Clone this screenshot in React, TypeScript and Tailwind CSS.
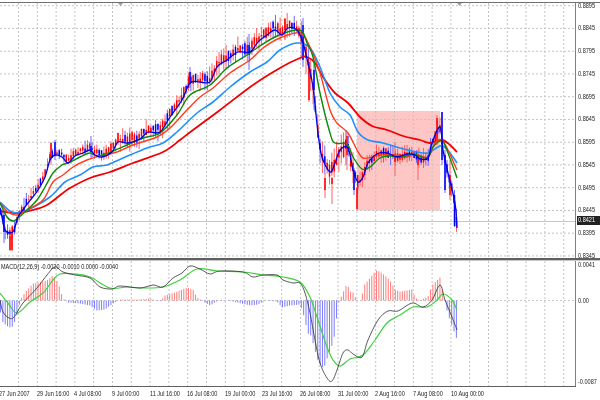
import React from 'react';

type Pt = [number, number];

const fast: Pt[] = [[0,208],[2,217],[5,230],[10,233],[14,230],[18,217],[25,207],[32,198],[38,190],[45,177],[50,160],[55,155],[62,157],[68,163],[75,156],[83,153],[90,150],[95,155],[102,157],[112,152],[118,142],[128,143],[140,139],[148,132],[160,132],[170,117],[182,100],[190,83],[200,82],[210,82],[217,67],[227,60],[238,52],[250,52],[258,42],[267,35],[275,30],[282,35],[288,28],[297,30],[303,43],[308,63],[313,87],[318,133],[322,157],[330,172],[335,163],[340,150],[348,148],[353,170],[358,182],[363,177],[368,163],[377,154],[387,153],[397,157],[407,154],[415,155],[420,159],[428,158],[432,143],[440,127],[443,150],[448,173],[455,203],[457,228]];
const green: Pt[] = [[0,203],[7,217],[13,221],[18,218],[27,210],[37,200],[45,187],[53,173],[62,165],[68,163],[80,157],[90,153],[98,156],[113,151],[127,145],[143,138],[160,133],[177,115],[190,95],[210,85],[227,68],[247,55],[257,48],[277,36],[300,30],[307,43],[313,57],[320,93],[330,133],[335,143],[347,144],[353,157],[362,169],[370,167],[380,158],[390,156],[403,157],[413,154],[427,158],[433,147],[442,141],[448,153],[457,178]];
const orange: Pt[] = [[0,203],[8,212],[17,215],[27,210],[43,200],[53,182],[63,175],[73,167],[87,160],[100,156],[117,152],[133,145],[157,137],[170,128],[187,110],[200,97],[213,88],[230,73],[250,60],[263,48],[280,38],[300,33],[310,47],[320,73],[330,110],[337,123],[348,133],[357,150],[363,158],[372,157],[380,155],[393,155],[407,157],[415,154],[428,157],[435,143],[442,140],[448,150],[457,170]];
const sky: Pt[] = [[0,202],[10,211],[18,213],[28,210],[50,197],[65,182],[80,175],[93,167],[107,165],[123,158],[147,148],[163,143],[177,132],[197,113],[213,102],[230,87],[250,72],[267,62],[280,50],[297,43],[310,48],[320,67],[330,93],[340,107],[350,115],[358,132],[368,140],[383,143],[400,148],[417,152],[428,153],[438,147],[443,146],[450,153],[457,163]];
const red: Pt[] = [[0,211],[17,213],[33,210],[47,205],[63,193],[70,188],[90,178],[110,172],[133,163],[163,152],[180,140],[193,130],[220,110],[253,85],[280,68],[300,58],[307,57],[315,63],[323,77],[335,93],[348,103],[360,117],[372,126],[387,130],[403,136],[420,140],[430,143],[442,140],[450,145],[457,152]];

const macd: Pt[] = [[0,300],[3,312],[9,318],[14,317],[23,303],[37,288],[47,275],[55,267],[63,272],[75,275],[90,278],[100,287],[112,289],[120,286],[140,288],[153,285],[163,287],[173,278],[182,273],[190,266],[200,269],[210,274],[220,271],[243,272],[253,277],[263,275],[277,275],[283,280],[293,283],[300,283],[305,293],[310,313],[315,340],[320,363],[327,378],[332,381],[337,370],[343,353],[348,350],[353,354],[362,357],[368,340],[378,320],[388,311],[398,311],[412,303],[423,307],[432,300],[440,285],[445,300],[452,317],[457,330]];
const signal: Pt[] = [[0,293],[8,303],[17,313],[30,302],[43,293],[53,280],[60,274],[75,274],[90,277],[110,288],[127,287],[143,288],[163,287],[180,280],[197,269],[217,271],[243,272],[263,275],[283,277],[300,282],[310,297],[317,317],[327,347],[333,360],[340,366],[350,359],[363,355],[375,340],[387,323],[400,315],[413,307],[427,307],[437,300],[443,294],[452,300],[457,310]];

const histogram: Pt[] = [[0,-10],[3,-22],[9,-27],[13,-26],[18,-12],[20,0],[25,8],[33,17],[40,18],[47,20],[53,25],[58,18],[63,2],[68,-2],[80,-3],[90,-5],[97,-10],[105,-9],[113,-3],[120,1],[140,1],[150,2],[160,-1],[165,5],[175,8],[187,13],[193,11],[197,3],[205,-2],[210,-5],[220,1],[233,-1],[250,-5],[258,-4],[265,0],[277,-1],[282,-7],[290,-5],[300,-4],[303,-12],[308,-33],[311,-35],[315,-50],[318,-60],[322,-67],[325,-65],[328,-55],[332,-45],[335,-33],[338,-4],[340,1],[344,10],[347,17],[350,9],[353,8],[357,0],[361,0],[364,15],[368,20],[372,25],[376,30],[380,29],[385,25],[390,20],[395,11],[400,9],[407,10],[412,11],[415,3],[420,0],[428,4],[432,15],[437,20],[440,23],[443,7],[447,-10],[450,-20],[453,-28],[457,-39]];

const lerp = (pts: Pt[], x: number) => {
  for (let i = 1; i < pts.length; i++) {
    if (x <= pts[i][0]) {
      const [x0, y0] = pts[i - 1];
      const [x1, y1] = pts[i];
      return y0 + ((y1 - y0) * (x - x0)) / (x1 - x0);
    }
  }
  return pts[pts.length - 1][1];
};

// catmull-rom, keeps the traced points on the curve
const smooth = (p: Pt[]) => {
  let d = `M${p[0][0]} ${p[0][1]}`;
  for (let i = 0; i < p.length - 1; i++) {
    const a = p[Math.max(i - 1, 0)];
    const b = p[i];
    const c = p[i + 1];
    const e = p[Math.min(i + 2, p.length - 1)];
    d += `C${(b[0] + (c[0] - a[0]) / 6).toFixed(1)} ${(b[1] + (c[1] - a[1]) / 6).toFixed(1)} ${(c[0] - (e[0] - b[0]) / 6).toFixed(1)} ${(c[1] - (e[1] - b[1]) / 6).toFixed(1)} ${c[0]} ${c[1]}`;
  }
  return d;
};

const rnd = (n: number) => {
  const v = Math.sin(n * 12.9898) * 43758.5453;
  return v - Math.floor(v);
};

const spread = (x: number) => {
  if (x < 30) return 9;
  if (x < 110) return 7;
  if (x < 300) return 11;
  if (x < 358) return 16;
  if (x < 430) return 9;
  return 10;
};

type Bar = { x: number; hi: number; lo: number; top: number; bot: number; up: boolean };

const bars: Bar[] = [];
for (let i = 0; i * 2.35 <= 457; i++) {
  const x = i * 2.35 + 0.5;
  const mid = lerp(fast, x) - (x > 25 && x < 300 ? 3 : 0);
  const r = spread(x);
  const hi = mid - r * (0.3 + rnd(i) * 0.9);
  const lo = mid + r * (0.3 + rnd(i + 50) * 0.9);
  const top = mid - r * 0.6 * rnd(i + 100);
  const bot = mid + r * 0.5 * rnd(i + 150);
  const slope = lerp(fast, x + 4) - lerp(fast, x - 4);
  bars.push({ x, hi, lo, top, bot, up: rnd(i + 200) + (slope < 0 ? 0.2 : -0.1) > 0.5 });
}

const extraBars: Bar[] = [
  { x: 4, hi: 210, lo: 243, top: 215, bot: 232, up: false },
  { x: 10, hi: 235, lo: 251, top: 236, bot: 250, up: true },
  { x: 12, hi: 232, lo: 251, top: 234, bot: 250, up: true },
  { x: 51, hi: 142, lo: 165, top: 143, bot: 158, up: true },
  { x: 55, hi: 140, lo: 160, top: 142, bot: 156, up: false },
  { x: 91, hi: 136, lo: 158, top: 146, bot: 152, up: false },
  { x: 190, hi: 67, lo: 88, top: 72, bot: 84, up: false },
  { x: 249, hi: 34, lo: 70, top: 45, bot: 55, up: false },
  { x: 285, hi: 18, lo: 40, top: 19, bot: 30, up: true },
  { x: 303, hi: 18, lo: 67, top: 25, bot: 60, up: false },
  { x: 309, hi: 60, lo: 102, top: 62, bot: 100, up: true },
  { x: 314, hi: 60, lo: 110, top: 70, bot: 90, up: false },
  { x: 325, hi: 173, lo: 198, top: 178, bot: 190, up: true },
  { x: 332, hi: 177, lo: 204, top: 178, bot: 184, up: true },
  { x: 347, hi: 133, lo: 170, top: 136, bot: 155, up: true },
  { x: 354, hi: 168, lo: 195, top: 170, bot: 190, up: false },
  { x: 357, hi: 187, lo: 210, top: 188, bot: 209, up: true },
  { x: 395, hi: 142, lo: 176, top: 155, bot: 162, up: true },
  { x: 418, hi: 150, lo: 180, top: 155, bot: 165, up: true },
  { x: 437, hi: 115, lo: 145, top: 118, bot: 140, up: true },
  { x: 442, hi: 112, lo: 165, top: 112, bot: 160, up: false },
  { x: 445, hi: 150, lo: 193, top: 155, bot: 190, up: false },
  { x: 450, hi: 160, lo: 200, top: 175, bot: 195, up: true },
  { x: 454.5, hi: 190, lo: 227, top: 195, bot: 226, up: false },
  { x: 456.5, hi: 212, lo: 232, top: 221, bot: 226, up: true },
];

const gridX = Array.from({ length: 30 }, (_, i) => 18.5 + i * 18.8);
const gridY = Array.from({ length: 12 }, (_, i) => 5.7 + i * 22.75);
const prices = ['0.8895', '0.8845', '0.8795', '0.8745', '0.8695', '0.8645', '0.8595', '0.8545', '0.8495', '0.8445', '0.8395', '0.8345'];
const times = ['27 Jun 2007', '29 Jun 16:00', '4 Jul 08:00', '9 Jul 00:00', '11 Jul 16:00', '16 Jul 08:00', '19 Jul 00:00', '23 Jul 16:00', '26 Jul 08:00', '31 Jul 00:00', '2 Aug 16:00', '7 Aug 08:00', '10 Aug 00:00'];

const App: React.FC = () => {
  return (
    <div className="w-[600px] h-[400px] bg-white overflow-hidden flex flex-col blur-[0.3px] text-[6.8px] text-[#222] font-['Liberation_Sans',Arial,sans-serif]">
      <div className="h-[2px] shrink-0" />
      <div className="h-[1px] shrink-0 bg-[#707070] w-full" />

      <div className="h-[255px] shrink-0 flex">
        <svg width="575" height="255" viewBox="0 3 575 255" className="shrink-0">
          <rect x="357" y="111" width="83" height="99.5" fill="#ffc6c6" />
          {gridX.map((x) => (
            <line key={x} x1={x} x2={x} y1="3" y2="258" stroke="#c4c4c4" strokeDasharray="2 2" />
          ))}
          {gridY.map((y) => (
            <line key={y} x1="0" x2="575" y1={y} y2={y} stroke="#c4c4c4" strokeDasharray="2 2" />
          ))}
          <line x1="0" x2="575" y1="221.5" y2="221.5" stroke="#c8c8c8" />
          <polygon points="118,3 123,3 120.5,6" fill="#a0a0a0" />
          <polygon points="457,3 462,3 459.5,6" fill="#a0a0a0" />

          {[...bars, ...extraBars].map((b, i) => (
            <g key={i}>
              <line x1={b.x} x2={b.x} y1={b.hi} y2={b.lo} stroke={b.up ? '#ff6060' : '#6868ff'} strokeWidth="1" />
              <line x1={b.x} x2={b.x} y1={b.top} y2={b.bot} stroke={b.up ? '#ff0000' : '#0000ff'} strokeWidth="1.5" />
            </g>
          ))}

          <path d={smooth(red)} fill="none" stroke="#f00000" strokeWidth="1.8" />
          <path d={smooth(sky)} fill="none" stroke="#1e90ff" strokeWidth="1.6" />
          <path d={smooth(orange)} fill="none" stroke="#ff3c1e" strokeWidth="1.4" />
          <path d={smooth(green)} fill="none" stroke="#0a8a0a" strokeWidth="1.4" />
          <path d={smooth(fast)} fill="none" stroke="#0000e0" strokeWidth="1.3" />
        </svg>
        <div className="relative w-[25px] border-l border-[#808080] pl-[2px] flex flex-col">
          {prices.map((p) => (
            <div key={p} className="h-[22.75px] shrink-0 flex items-center first:-mt-[8.7px]">
              <span className="scale-x-[0.82] origin-left">{p}</span>
            </div>
          ))}
          <div className="absolute left-[1px] top-[213px] h-[9px] w-[24px] bg-[#222] text-white flex items-center pl-[1px]">
            <span className="scale-x-[0.82] origin-left">0.8421</span>
          </div>
        </div>
      </div>

      <div className="h-[3px] shrink-0 flex flex-col">
        <div className="h-[2px] bg-[#606060]" />
        <div className="h-[1px] bg-[#c8c8c8]" />
      </div>

      <div className="relative h-[125px] shrink-0 flex">
        <svg width="575" height="125" viewBox="0 261 575 125" className="shrink-0">
          {gridX.map((x) => (
            <line key={x} x1={x} x2={x} y1="261" y2="386" stroke="#c4c4c4" strokeDasharray="2 2" />
          ))}
          <line x1="0" x2="575" y1="300.5" y2="300.5" stroke="#c4c4c4" strokeDasharray="2 2" />
          {Array.from({ length: 195 }, (_, i) => {
            const x = i * 2.35 + 0.5;
            const v = lerp(histogram, x);
            return (
              <line key={i} x1={x} x2={x} y1="300.5" y2={300.5 - v} stroke={v >= 0 ? '#ff7c7c' : '#7c7cff'} strokeWidth="1" />
            );
          })}
          <path d={smooth(signal)} fill="none" stroke="#40d040" strokeWidth="1.2" />
          <path d={smooth(macd)} fill="none" stroke="#303030" strokeWidth="0.8" />
        </svg>
        <div className="absolute left-[1px] top-[1px] whitespace-nowrap leading-[10px] scale-x-[0.81] origin-left">MACD(12,26,9) -0.0020 -0.0010 0.0000 -0.0040</div>
        <div className="relative w-[25px] border-l border-[#808080] pl-[2px] flex flex-col whitespace-nowrap">
          <div className="mt-[-1px] h-[10px] leading-[10px] scale-x-[0.82] origin-left">0.0041</div>
          <div className="mt-[25.5px] h-[10px] leading-[10px] scale-x-[0.82] origin-left">0.00</div>
          <div className="mt-[71.5px] h-[10px] leading-[10px] scale-x-[0.82] origin-left">-0.0087</div>
        </div>
      </div>

      <div className="h-[1px] shrink-0 w-[576px] bg-[#606060]" />
      <div className="flex pt-[2px] -ml-[1px] leading-[10px] whitespace-nowrap">
        {times.map((t) => (
          <div key={t} className="w-[37.65px] shrink-0 scale-x-[0.82] origin-left">{t}</div>
        ))}
      </div>
    </div>
  );
};

export default App;
